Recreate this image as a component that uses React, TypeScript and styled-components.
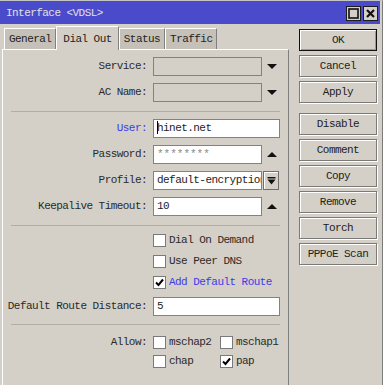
import React from 'react';
import styled, { createGlobalStyle } from 'styled-components';

const GlobalStyle = createGlobalStyle`
  html, body {
    margin: 0;
    padding: 0;
    background: #d4d0c8;
  }
  body {
    font-family: "Liberation Mono", "DejaVu Sans Mono", monospace;
    font-size: 11px;
    letter-spacing: -0.55px;
    color: #222;
  }
  * {
    box-sizing: border-box;
  }
`;

const Window = styled.div`
  width: 383px;
  height: 385px;
  overflow: hidden;
  display: flex;
  flex-direction: column;
  background: #d4d0c8;
  border-top: 1px solid #c4c4c4;
  border-right: 1px solid #7c7c7c;
`;

const TitleBar = styled.div`
  height: 23px;
  margin-right: 2px;
  display: flex;
  align-items: center;
  justify-content: space-between;
  padding: 1px 2px 0 6px;
  background: #4a4bcb;
  color: #e2e2e2;
`;

const TitleButtons = styled.div`
  display: flex;
  gap: 2px;
`;

const TitleButton = styled.div`
  width: 15px;
  height: 15px;
  display: flex;
  align-items: center;
  justify-content: center;
  background: #d4d0c8;
  border: 1px solid #1c1c1c;
`;

const Body = styled.div`
  flex: 1;
  display: flex;
  padding: 2px 0 0 2px;
  min-height: 0;
`;

const LeftColumn = styled.div`
  width: 287px;
  display: flex;
  flex-direction: column;
`;

const TabRow = styled.div`
  height: 23px;
  display: flex;
  align-items: flex-end;
  padding-left: 2px;
  position: relative;
  z-index: 1;
`;

const Tab = styled.div<{ $active?: boolean }>`
  height: ${(p) => (p.$active ? 24 : 21)}px;
  margin-bottom: ${(p) => (p.$active ? -1 : 0)}px;
  padding: 0 ${(p) => (p.$active ? 6 : 4)}px;
  display: flex;
  align-items: center;
  background: ${(p) => (p.$active ? '#d4d0c8' : '#c5c1b9')};
  border-top: 1px solid #fff;
  border-left: 1px solid #fff;
  border-right: 1px solid #808080;
  white-space: nowrap;
`;

const Panel = styled.div`
  flex: 1;
  display: flex;
  flex-direction: column;
  padding-top: 7px;
  background: #d4d0c8;
  border-top: 1px solid #fff;
  border-left: 1px solid #fff;
  border-right: 1px solid #808080;
`;

const Section = styled.div<{ $gap: number }>`
  display: flex;
  flex-direction: column;
  gap: ${(p) => p.$gap}px;
`;

const Separator = styled.div<{ $top: number; $bottom: number }>`
  height: 1px;
  margin: ${(p) => p.$top}px 8px ${(p) => p.$bottom}px 8px;
  background: #b2aea6;
`;

const Row = styled.div<{ $h?: number }>`
  display: grid;
  grid-template-columns: 144px 1fr;
  column-gap: 6px;
  align-items: start;
  min-height: ${(p) => p.$h ?? 19}px;
`;

const Label = styled.div<{ $blue?: boolean; $h?: number }>`
  text-align: right;
  line-height: ${(p) => p.$h ?? 19}px;
  color: ${(p) => (p.$blue ? '#3b3bea' : '#2a2a2a')};
  white-space: nowrap;
`;

const FieldLine = styled.div`
  display: flex;
  align-items: center;
  height: 19px;
`;

const Field = styled.div<{ $w: number; $disabled?: boolean }>`
  width: ${(p) => p.$w}px;
  height: 19px;
  padding-left: 3px;
  line-height: 17px;
  overflow: hidden;
  white-space: nowrap;
  background: ${(p) => (p.$disabled ? '#d4d0c8' : '#fff')};
  border: 1px solid #828282;
  color: #1e1e1e;
`;

const Masked = styled.span`
  color: #8a8a8a;
  letter-spacing: 0;
`;

const Caret = styled.span`
  display: inline-block;
  width: 1px;
  height: 13px;
  margin-right: -1px;
  vertical-align: -3px;
  background: #000;
`;

const ArrowBox = styled.div`
  width: 18px;
  height: 19px;
  display: flex;
  align-items: center;
  justify-content: center;
  padding-left: 2px;
`;

const Triangle = styled.span<{ $up?: boolean }>`
  width: 0;
  height: 0;
  border-left: 5px solid transparent;
  border-right: 5px solid transparent;
  ${(p) =>
    p.$up ? 'border-bottom: 5px solid #111;' : 'border-top: 5px solid #111;'}
`;

const SmallButton = styled.div`
  width: 16px;
  height: 19px;
  margin-left: 1px;
  display: flex;
  align-items: center;
  justify-content: center;
  background: #d4d0c8;
  border: 1px solid #6e6e6e;
  box-shadow: inset 1px 1px 0 #fff;
`;

const CheckItem = styled.div`
  display: flex;
  align-items: center;
  gap: 3px;
  height: 13px;
  white-space: nowrap;
`;

const Box = styled.div`
  width: 13px;
  height: 13px;
  display: flex;
  align-items: center;
  justify-content: center;
  background: #fff;
  border: 1px solid #7a7a7a;
`;

const CheckText = styled.span<{ $blue?: boolean }>`
  line-height: 13px;
  color: ${(p) => (p.$blue ? '#3b3bea' : '#2a2a2a')};
`;

const CheckGrid = styled.div`
  display: grid;
  grid-template-columns: 67px 67px;
  row-gap: 6px;
`;

const RightColumn = styled.div`
  width: 78px;
  margin-left: 10px;
  padding-top: 3px;
  display: flex;
  flex-direction: column;
`;

const ButtonGroup = styled.div`
  display: flex;
  flex-direction: column;
  gap: 4px;
  & + & {
    margin-top: 10px;
  }
`;

const Button = styled.div<{ $default?: boolean }>`
  height: 22px;
  display: flex;
  align-items: center;
  justify-content: center;
  background: #d4d0c8;
  color: #222;
  border: 1px solid ${(p) => (p.$default ? '#111' : '#7a7a7a')};
  box-shadow: ${(p) =>
    p.$default
      ? 'inset 1px 1px 0 #fff, inset -1px -1px 0 #9a9a9a'
      : 'inset 1px 1px 0 #fff, 1px 1px 0 #fff'};
  white-space: nowrap;
`;

const Check = ({ checked, label, blue }: { checked?: boolean; label: string; blue?: boolean }) => (
  <CheckItem>
    <Box>
      {checked && (
        <svg width="9" height="9" viewBox="0 0 9 9">
          <path d="M1 4.5 L3.5 7 L8 1.5" fill="none" stroke="#000" strokeWidth="2" />
        </svg>
      )}
    </Box>
    <CheckText $blue={blue}>{label}</CheckText>
  </CheckItem>
);

export default function App() {
  return (
    <>
      <GlobalStyle />
      <Window>
        <TitleBar>
          <span>Interface &lt;VDSL&gt;</span>
          <TitleButtons>
            <TitleButton>
              <svg width="11" height="11" viewBox="0 0 11 11">
                <rect x="1" y="1" width="9" height="9" fill="none" stroke="#111" strokeWidth="1.6" />
              </svg>
            </TitleButton>
            <TitleButton>
              <svg width="11" height="11" viewBox="0 0 11 11">
                <path d="M2 2 L9 9 M9 2 L2 9" stroke="#111" strokeWidth="2.2" />
              </svg>
            </TitleButton>
          </TitleButtons>
        </TitleBar>
        <Body>
          <LeftColumn>
            <TabRow>
              <Tab>General</Tab>
              <Tab $active>Dial Out</Tab>
              <Tab>Status</Tab>
              <Tab>Traffic</Tab>
            </TabRow>
            <Panel>
              <Section $gap={7}>
                <Row>
                  <Label>Service:</Label>
                  <FieldLine>
                    <Field $w={109} $disabled />
                    <ArrowBox>
                      <Triangle />
                    </ArrowBox>
                  </FieldLine>
                </Row>
                <Row>
                  <Label>AC Name:</Label>
                  <FieldLine>
                    <Field $w={109} $disabled />
                    <ArrowBox>
                      <Triangle />
                    </ArrowBox>
                  </FieldLine>
                </Row>
              </Section>
              <Separator $top={9} $bottom={7} />
              <Section $gap={7}>
                <Row>
                  <Label $blue>User:</Label>
                  <FieldLine>
                    <Field $w={127}>
                      <Caret />
                      hinet.net
                    </Field>
                  </FieldLine>
                </Row>
                <Row>
                  <Label>Password:</Label>
                  <FieldLine>
                    <Field $w={109}>
                      <Masked>********</Masked>
                    </Field>
                    <ArrowBox>
                      <Triangle $up />
                    </ArrowBox>
                  </FieldLine>
                </Row>
                <Row>
                  <Label>Profile:</Label>
                  <FieldLine>
                    <Field $w={109}>default-encryption</Field>
                    <SmallButton>
                      <svg width="9" height="8" viewBox="0 0 9 8">
                        <rect x="0.5" y="0" width="8" height="1.5" fill="#111" />
                        <polygon points="0.5,2.5 8.5,2.5 4.5,7.5" fill="#111" />
                      </svg>
                    </SmallButton>
                  </FieldLine>
                </Row>
                <Row>
                  <Label>Keepalive Timeout:</Label>
                  <FieldLine>
                    <Field $w={109}>10</Field>
                    <ArrowBox>
                      <Triangle $up />
                    </ArrowBox>
                  </FieldLine>
                </Row>
              </Section>
              <Separator $top={9} $bottom={8} />
              <Section $gap={8}>
                <Row $h={13}>
                  <span />
                  <Check label="Dial On Demand" />
                </Row>
                <Row $h={13}>
                  <span />
                  <Check label="Use Peer DNS" />
                </Row>
                <Row $h={13}>
                  <span />
                  <Check checked blue label="Add Default Route" />
                </Row>
                <Row>
                  <Label>Default Route Distance:</Label>
                  <FieldLine>
                    <Field $w={127}>5</Field>
                  </FieldLine>
                </Row>
              </Section>
              <Separator $top={8} $bottom={11} />
              <Row $h={13}>
                <Label $h={13}>Allow:</Label>
                <CheckGrid>
                  <Check label="mschap2" />
                  <Check label="mschap1" />
                  <Check label="chap" />
                  <Check checked label="pap" />
                </CheckGrid>
              </Row>
            </Panel>
          </LeftColumn>
          <RightColumn>
            <ButtonGroup>
              <Button $default>OK</Button>
              <Button>Cancel</Button>
              <Button>Apply</Button>
            </ButtonGroup>
            <ButtonGroup>
              <Button>Disable</Button>
              <Button>Comment</Button>
              <Button>Copy</Button>
              <Button>Remove</Button>
              <Button>Torch</Button>
              <Button>PPPoE Scan</Button>
            </ButtonGroup>
          </RightColumn>
        </Body>
      </Window>
    </>
  );
}
